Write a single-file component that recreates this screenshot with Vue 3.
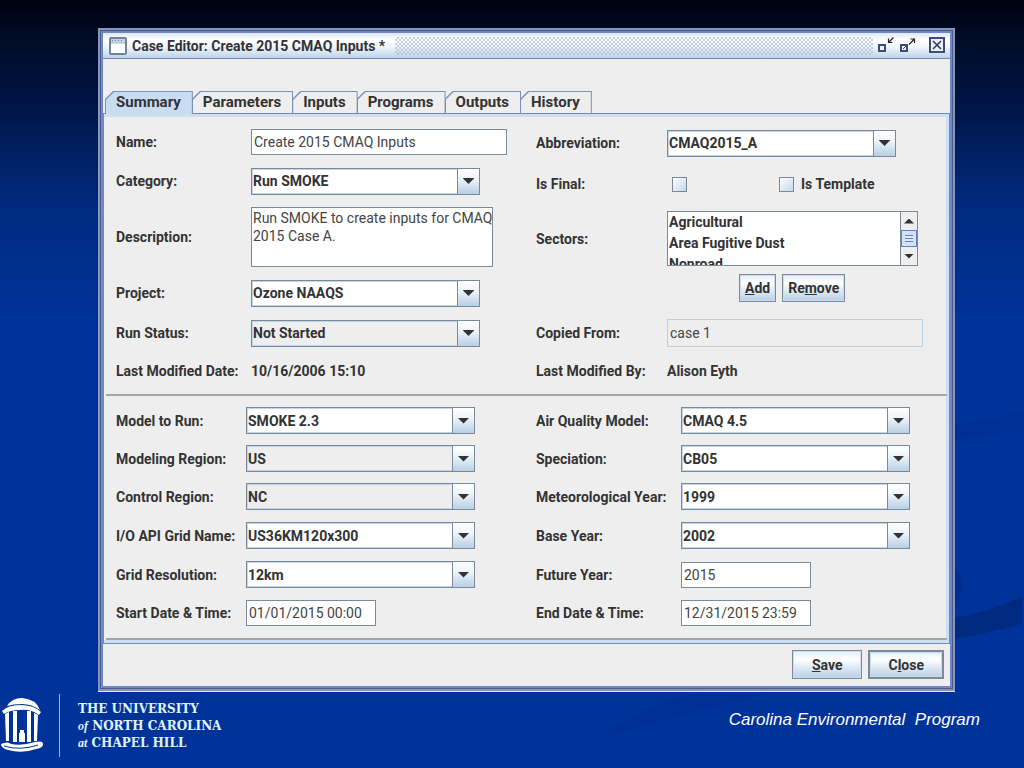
<!-- Case editor window on a presentation slide -->
<template>
  <div class="slide">
    <svg class="swoosh" viewBox="0 0 1024 768" preserveAspectRatio="none" aria-hidden="true">
      <path d="M955 425 Q990 420 1024 411 V431 Q990 431 955 440 Z" fill="#002f94" />
      <path d="M955 568 Q972 582 955 602 Z" fill="#002e90" />
      <path d="M955 617 Q990 611 1022 596 V623 Q990 632 955 638 Z" fill="#002a80" />
      <path d="M600 738 Q640 705 700 692 H770 Q690 710 600 738 Z" fill="#003096" />
    </svg>

    <main class="window">
      <header class="title-bar">
        <svg class="title-icon" width="18" height="18" viewBox="0 0 18 18" aria-hidden="true">
          <rect x="1" y="1" width="16" height="16" rx="1" fill="#fff" stroke="#71829c" stroke-width="2" />
          <rect x="2" y="2" width="14" height="4" fill="#c5d5e8" />
          <path d="M3 3.5h12" stroke="#71829c" stroke-dasharray="1 2" />
          <path d="M2 6h14" stroke="#a7b8ce" />
        </svg>
        <h1 class="title">Case Editor: Create 2015 CMAQ Inputs *</h1>
        <div class="title-grip"></div>
        <div class="title-actions">
          <button type="button" class="icon-btn" aria-label="Minimize">
            <svg width="18" height="18" viewBox="0 0 18 18">
              <rect x="3" y="8" width="6" height="6" fill="#eef4fb" stroke="#3f4a78" stroke-width="2" />
              <path d="M17.500 0.500L13 5M12.500 1.500v4h4" fill="none" stroke="#222" stroke-width="1.200" />
            </svg>
          </button>
          <button type="button" class="icon-btn" aria-label="Maximize">
            <svg width="18" height="18" viewBox="0 0 18 18">
              <rect x="3" y="8" width="6" height="6" fill="#eef4fb" stroke="#3f4a78" stroke-width="2" />
              <path d="M5 12l3-3" stroke="#3f4a78" />
              <path d="M11 7.500L16 2.500M12.500 2h4v4" fill="none" stroke="#222" stroke-width="1.200" />
            </svg>
          </button>
          <button type="button" class="icon-btn close" aria-label="Close window">
            <svg width="18" height="18" viewBox="0 0 18 18">
              <rect x="2" y="1" width="14" height="14" fill="#e8f0f9" stroke="#3f4a78" stroke-width="2" />
              <path d="M5 4l8 8M13 4l-8 8" stroke="#333c62" stroke-width="1.600" />
            </svg>
          </button>
        </div>
      </header>

      <nav class="tabs" role="tablist">
        <button
          v-for="tab in tabs"
          :key="tab"
          type="button"
          role="tab"
          class="tab"
          :class="{ active: tab === activeTab }"
          :aria-selected="tab === activeTab"
          @click="activeTab = tab"
        >
          {{ tab }}
        </button>
      </nav>

      <form class="panel" @submit.prevent>
        <!-- General information -->
        <section class="section general">
          <div class="column">
            <div class="row short">
              <label for="name">Name:</label>
              <input id="name" v-model="form.name" type="text" class="text-box wide" />
            </div>
            <div class="row">
              <label for="category">Category:</label>
              <div class="combo">
                <select id="category"><option>Run SMOKE</option></select>
                <span class="combo-arrow"></span>
              </div>
            </div>
            <div class="row">
              <label for="description">Description:</label>
              <textarea id="description" v-model="form.description" wrap="off" class="text-box area"></textarea>
            </div>
            <div class="row">
              <label for="project">Project:</label>
              <div class="combo">
                <select id="project"><option>Ozone NAAQS</option></select>
                <span class="combo-arrow"></span>
              </div>
            </div>
            <div class="row">
              <label for="status">Run Status:</label>
              <div class="combo plain">
                <select id="status"><option>Not Started</option></select>
                <span class="combo-arrow"></span>
              </div>
            </div>
            <div class="row info">
              <span>Last Modified Date:</span>
              <span>10/16/2006 15:10</span>
            </div>
          </div>

          <div class="column right">
            <div class="row">
              <label for="abbreviation">Abbreviation:</label>
              <div class="combo">
                <select id="abbreviation"><option>CMAQ2015_A</option></select>
                <span class="combo-arrow"></span>
              </div>
            </div>
            <div class="row checks">
              <label for="final">Is Final:</label>
              <div class="check-group">
                <input id="final" v-model="form.isFinal" type="checkbox" class="check" />
                <label class="check-label">
                  <input v-model="form.isTemplate" type="checkbox" class="check" />
                  Is Template
                </label>
              </div>
            </div>
            <div class="sectors">
              <div class="row">
                <label for="sectors">Sectors:</label>
                <div class="list-box">
                  <select id="sectors" multiple>
                    <option v-for="sector in sectors" :key="sector">{{ sector }}</option>
                  </select>
                  <div class="scroll-bar">
                    <button type="button" class="scroll-btn up" aria-label="Scroll up"></button>
                    <div class="scroll-thumb"></div>
                    <button type="button" class="scroll-btn down" aria-label="Scroll down"></button>
                  </div>
                </div>
              </div>
              <div class="sector-actions">
                <button type="button" class="btn small"><u>A</u>dd</button>
                <button type="button" class="btn small">Re<u>m</u>ove</button>
              </div>
            </div>
            <div class="row">
              <label for="copied">Copied From:</label>
              <input id="copied" type="text" class="text-box wide disabled" value="case 1" readonly />
            </div>
            <div class="row info">
              <span>Last Modified By:</span>
              <span>Alison Eyth</span>
            </div>
          </div>
        </section>

        <hr class="divider" />

        <!-- Model settings -->
        <section class="section model">
          <div v-for="(column, index) in modelColumns" :key="index" class="column" :class="{ right: index === 1 }">
            <div v-for="field in column" :key="field.id" class="row">
              <label :for="field.id">{{ field.label }}</label>
              <input v-if="field.type === 'text'" :id="field.id" v-model="field.value" type="text" class="text-box" />
              <div v-else class="combo" :class="{ plain: field.type === 'plain' }">
                <select :id="field.id"><option>{{ field.value }}</option></select>
                <span class="combo-arrow"></span>
              </div>
            </div>
          </div>
        </section>

        <hr class="divider last" />
      </form>

      <footer class="window-actions">
        <button type="button" class="btn"><u>S</u>ave</button>
        <button type="button" class="btn default">C<u>l</u>ose</button>
      </footer>
    </main>

    <footer class="slide-footer">
      <div class="brand">
        <!-- Old Well -->
        <svg class="brand-logo" width="44" height="56" viewBox="0 0 44 56" aria-hidden="true">
          <path d="M7 8Q12 0 22 0Q36 1 40 12Q32 6 22 6Q13 6 7 8Z" fill="#fff" />
          <path d="M2 13Q8 7 20 7Q34 7 41 14L39 17Q31 11 20 12Q10 12 4 16Z" fill="#fff" />
          <path d="M5 16l4-2v29H6zM13 13h4v31h-4zM27 13h4v31h-4zM34 15l4 2-1 26h-3z" fill="#fff" />
          <path d="M19 44v-9h1v-3h4v3h1v9z" fill="#fff" />
          <path d="M1 46Q8 43 11 46Q22 48 35 44Q44 42 43 47Q42 50 36 51Q22 56 8 52Q1 50 1 46Z" fill="#fff" />
          <path d="M4 48Q20 53 38 47" fill="none" stroke="#003399" />
        </svg>
        <p class="brand-name">
          THE UNIVERSITY<br />
          <i>of</i> NORTH CAROLINA<br />
          <i>at</i> CHAPEL HILL
        </p>
      </div>
      <p class="program">Carolina Environmental&nbsp; Program</p>
    </footer>
  </div>
</template>

<script setup>
import { reactive, ref } from 'vue';

const tabs = ['Summary', 'Parameters', 'Inputs', 'Programs', 'Outputs', 'History'];
const activeTab = ref('Summary');

const form = reactive({
  name: 'Create 2015 CMAQ Inputs',
  description: 'Run SMOKE to create inputs for CMAQ\n2015 Case A.',
  isFinal: false,
  isTemplate: false,
});

const sectors = ['Agricultural', 'Area Fugitive Dust', 'Nonroad'];

const modelColumns = reactive([
  [
    { id: 'model', label: 'Model to Run:', value: 'SMOKE 2.3', type: 'combo' },
    { id: 'region', label: 'Modeling Region:', value: 'US', type: 'plain' },
    { id: 'control', label: 'Control Region:', value: 'NC', type: 'plain' },
    { id: 'grid', label: 'I/O API Grid Name:', value: 'US36KM120x300', type: 'combo' },
    { id: 'resolution', label: 'Grid Resolution:', value: '12km', type: 'combo' },
    { id: 'start', label: 'Start Date & Time:', value: '01/01/2015 00:00', type: 'text' },
  ],
  [
    { id: 'air', label: 'Air Quality Model:', value: 'CMAQ 4.5', type: 'combo' },
    { id: 'speciation', label: 'Speciation:', value: 'CB05', type: 'combo' },
    { id: 'met-year', label: 'Meteorological Year:', value: '1999', type: 'combo' },
    { id: 'base-year', label: 'Base Year:', value: '2002', type: 'combo' },
    { id: 'future-year', label: 'Future Year:', value: '2015', type: 'text' },
    { id: 'end', label: 'End Date & Time:', value: '12/31/2015 23:59', type: 'text' },
  ],
]);
</script>

<style>
body {
  background: #003399;
}
</style>

<style scoped>
* {
  box-sizing: border-box;
}

.slide {
  position: relative;
  display: flex;
  flex-direction: column;
  min-height: 100vh;
  background: linear-gradient(#000010 0, #000c24 5%, #001344 13%, #002063 20%, #002a80 27%, #003399 42%);
  color: #333;
  font: bold 14px/18px Roboto, "Liberation Sans", Arial, sans-serif;
}

.slide button,
.slide select,
.slide input,
.slide textarea {
  margin: 0;
  color: #333;
  font: inherit;
}

.swoosh {
  position: absolute;
  inset: 0;
  width: 100%;
  height: 100%;
}

.window {
  position: relative;
  margin: 28px 69px 0 98px;
  padding: 3px;
  border: 2px solid #8795ba;
  outline: 1px solid #4c5c8a;
  outline-offset: -3px;
  background: #6f88c8;
  box-shadow: 0 1px 0 #dfe6f4;
}

/* Title bar */
.title-bar {
  display: flex;
  align-items: center;
  height: 26px;
  padding: 0 4px 0 6px;
  border-bottom: 1px solid #7189b8;
  background: linear-gradient(#dfeaf6, #fff 30%, #f5f9fd 50%, #bfd3ea);
}

.title {
  margin: 0 10px 0 5px;
  font-size: 14px;
  line-height: 18px;
  white-space: nowrap;
}

.title-grip {
  flex: 1;
  height: 18px;
  background: conic-gradient(#9db2d0 25%, transparent 0 50%, #9db2d0 0 75%, transparent 0) 0 0 / 4px 4px;
  opacity: 0.6;
}

.title-actions {
  display: flex;
  gap: 4px;
  margin-left: 3px;
}

.icon-btn {
  width: 18px;
  height: 18px;
  padding: 0;
  border: 0;
  background: none;
}

.icon-btn svg {
  display: block;
}

.icon-btn.close {
  margin-left: 8px;
}

/* Tabs */
.tabs {
  display: flex;
  padding: 32px 2px 0;
  background: #eee;
}

.tab {
  position: relative;
  height: 22px;
  padding: 0 12px 0 11px;
  border: 0;
  background: #7b90b5;
  clip-path: polygon(8px 0, 100% 0, 100% 100%, 0 100%, 0 8px);
  isolation: isolate;
}

.slide .tab {
  font-size: 15px;
}

.tab + .tab {
  margin-left: -1px;
}

.tab::before {
  position: absolute;
  z-index: -1;
  inset: 1px 1px 0;
  background: #eee;
  clip-path: polygon(8px 0, 100% 0, 100% 100%, 0 100%, 0 8px);
  content: "";
}

.tab.active {
  z-index: 1;
  height: 23px;
  margin-bottom: -1px;
  padding-bottom: 1px;
}

.tab.active::before {
  background: #c8ddf2;
}

/* Form panel */
.panel {
  padding: 15px 2px 3px;
  border: 1px solid #7189b8;
  background: #eee;
  box-shadow: inset 0 3px 0 #cddff2, inset -3px -3px 0 #cddff2;
}

.section {
  display: grid;
  grid-template-columns: 420fr 411fr;
  padding-left: 10px;
}

.column {
  display: grid;
  align-content: start;
  gap: 12px;
}

.model .column {
  grid-template-rows: 26px 26px 27px 27px 27px 26px;
}

.row {
  display: grid;
  grid-template-columns: 135px 1fr;
  align-items: center;
  white-space: nowrap;
}

.right .row {
  grid-template-columns: 131px 1fr;
}

.model .row {
  grid-template-columns: 130px 1fr;
}

.model .right .row {
  grid-template-columns: 145px 1fr;
}

.general .row {
  min-height: 28px;
}

.general .row.short {
  min-height: 26px;
}

.general .row.info {
  min-height: 24px;
}

.text-box {
  width: 130px;
  height: 26px;
  padding: 0 2px;
  border: 1px solid #7a8a99;
  border-radius: 0;
  background: #fff;
}

.slide .text-box {
  color: #444;
  font-weight: normal;
}

.text-box.wide {
  width: 256px;
}

.text-box.area {
  display: block;
  width: 242px;
  height: 60px;
  padding: 1px 0 0 1px;
  resize: none;
  overflow: hidden;
}

.text-box.disabled {
  height: 28px;
  border-color: #b8cfe5;
  background: #eee;
}

.combo {
  position: relative;
  width: 229px;
  height: 27px;
}

.combo select {
  width: 100%;
  height: 100%;
  padding: 0 25px 0 1px;
  border: 1px solid #7a8a99;
  border-radius: 0;
  appearance: none;
  background: #fff;
  box-shadow: inset 0 0 0 1px #c3d5e8;
}

.combo.plain select {
  background: #eee;
}

.combo-arrow {
  position: absolute;
  inset: 1px 1px 1px auto;
  display: grid;
  place-items: center;
  width: 22px;
  border-left: 1px solid #7a8a99;
  background: linear-gradient(#fff, #eef4fa 40%, #b8cfe5);
  pointer-events: none;
}

.combo-arrow::after,
.scroll-btn::after {
  width: 12px;
  height: 6px;
  background: #333;
  clip-path: polygon(0 0, 100% 0, 50% 100%);
  content: "";
}

.general .row.checks {
  min-height: 30px;
}

.check-group {
  display: flex;
  gap: 92px;
  padding-left: 5px;
}

.check-label {
  display: flex;
  gap: 7px;
}

.check {
  width: 15px;
  height: 15px;
  border: 1px solid #7a8a99;
  appearance: none;
  background: linear-gradient(135deg, #fff, #c3d7ea);
}

.slide .check {
  margin: 2px 0 1px;
}

.check:checked {
  background: #5c7ba8;
}

/* Sector list */
.sectors {
  display: grid;
  gap: 8px;
  padding-bottom: 5px;
}

.list-box {
  display: flex;
  width: 251px;
  height: 55px;
  border: 1px solid #7a8a99;
  background: #fff;
}

.list-box select {
  flex: 1;
  height: 53px;
  padding: 0;
  border: 0;
  outline: 0;
  background: #fff;
  overflow: auto;
  scrollbar-width: none;
}

.list-box option {
  min-height: 21px;
  padding: 2px 1px 1px;
  font-weight: bold;
  line-height: 18px;
}

.scroll-bar {
  display: grid;
  grid-template-rows: 18px 17px 18px;
  width: 17px;
  border-left: 1px solid #7a8a99;
  background: #eee;
}

.scroll-btn {
  display: grid;
  place-items: center;
  padding: 0;
  border: 0;
  background: #eee;
}

.scroll-btn::after {
  width: 10px;
  height: 5px;
}

.scroll-btn.up::after {
  clip-path: polygon(50% 0, 100% 100%, 0 100%);
}

.scroll-thumb {
  padding: 4px 3px;
  border: 1px solid #6382bf;
  background: repeating-linear-gradient(#6382bf 0 1px, #dcebfa 1px 3px) content-box, #cfe2f6;
}

.sector-actions {
  display: flex;
  gap: 6px;
  padding-left: 203px;
}

.btn {
  height: 29px;
  padding: 0 19px;
  border: 1px solid #7a8a99;
  border-radius: 0;
  background: linear-gradient(#e4eef8, #fff 30%, #e9f1f9 50%, #b8cfe5);
  box-shadow: inset 0 0 0 1px #cddcec;
}

.btn.small {
  height: 28px;
  padding: 0 5px;
}

.btn.default {
  padding: 0 18px;
  border-width: 2px;
}

.divider {
  height: 2px;
  margin: 11px 0;
  border: 0;
  background: #a5a5a5;
}

.divider.last {
  margin: 12px 0 0;
}

.window-actions {
  display: flex;
  justify-content: flex-end;
  gap: 6px;
  padding: 6px 6px 7px;
  background: #eee;
}

/* Slide footer */
.slide-footer {
  position: relative;
  display: flex;
  justify-content: space-between;
  align-items: flex-start;
  padding: 3px 44px 12px 0;
  color: #fff;
}

.brand {
  display: flex;
  align-items: center;
}

.brand-logo {
  margin-right: 15px;
}

.brand-name {
  margin: 0;
  padding: 7px 0 5px 18px;
  border-left: 1px solid #9db4dd;
  color: #e2f3ff;
  font: bold 12px/17px "DejaVu Serif", serif;
}

.brand-name i {
  font-family: "Liberation Serif", serif;
}

.program {
  margin: 16px 0 0;
  font: italic 17px/20px "Liberation Sans", Arial, sans-serif;
  white-space: nowrap;
}
</style>
